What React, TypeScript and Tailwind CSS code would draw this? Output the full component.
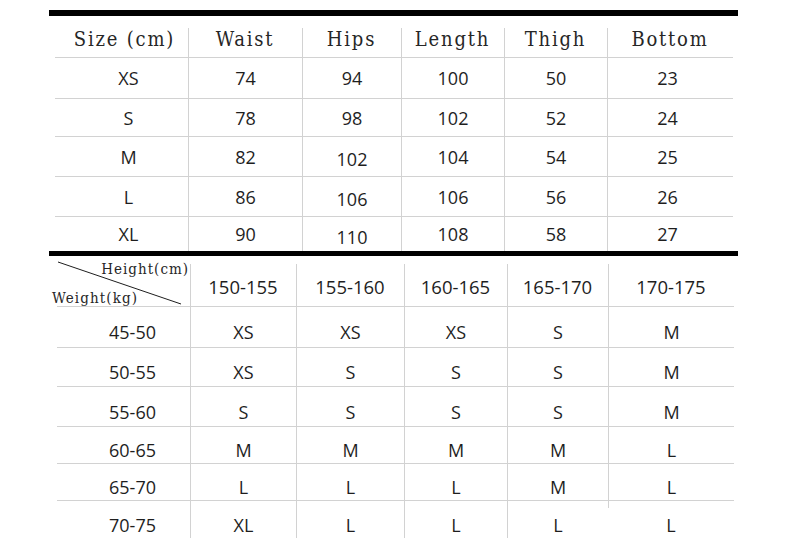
import React from "react";

const serif = { fontFamily: '"DejaVu Serif", "Liberation Serif", serif', fontStretch: "condensed" as const };
const sans = { fontFamily: '"Open Sans", "Noto Sans", sans-serif' };

const topW = ["w-[133px]", "w-[114px]", "w-[99px]", "w-[103px]", "w-[103px]", "w-[126px]"];
const botW = ["w-[133px]", "w-[106px]", "w-[108px]", "w-[103px]", "w-[101px]", "w-[126px]"];

const topHead = ["Size (cm)", "Waist", "Hips", "Length", "Thigh", "Bottom"];
const topRows: { h: string; cells: string[]; hipPad: string }[] = [
  { h: "h-[41px]", cells: ["XS", "74", "94", "100", "50", "23"], hipPad: "pt-0" },
  { h: "h-[38px]", cells: ["S", "78", "98", "102", "52", "24"], hipPad: "pt-0" },
  { h: "h-[40px]", cells: ["M", "82", "102", "104", "54", "25"], hipPad: "pt-[4px]" },
  { h: "h-[40px]", cells: ["L", "86", "106", "106", "56", "26"], hipPad: "pt-[4px]" },
  { h: "h-[34px]", cells: ["XL", "90", "110", "108", "58", "27"], hipPad: "pt-[5px]" },
];

const botHead = ["150-155", "155-160", "160-165", "165-170", "170-175"];
const botRows: { h: string; cells: string[] }[] = [
  { h: "h-[41px]", cells: ["45-50", "XS", "XS", "XS", "S", "M"] },
  { h: "h-[39px]", cells: ["50-55", "XS", "S", "S", "S", "M"] },
  { h: "h-[40px]", cells: ["55-60", "S", "S", "S", "S", "M"] },
  { h: "h-[37px]", cells: ["60-65", "M", "M", "M", "M", "L"] },
  { h: "h-[37px]", cells: ["65-70", "L", "L", "L", "M", "L"] },
  { h: "h-[37px]", cells: ["70-75", "XL", "L", "L", "L", "L"] },
];

const lineHead =
  "bg-[linear-gradient(#d2d2d2,#d2d2d2)] bg-no-repeat bg-[length:1px_29px] bg-[position:0_100%]";
const lineHeadBot =
  "bg-[linear-gradient(#d2d2d2,#d2d2d2)] bg-no-repeat bg-[length:1px_42px] bg-[position:0_100%]";
const lineStub =
  "bg-[linear-gradient(#d2d2d2,#d2d2d2)] bg-no-repeat bg-[length:1px_7px] bg-[position:0_0]";

export default function App() {
  return (
    <div className="w-[790px] h-[547px] bg-white text-[#1e1e1e] pt-[10px] overflow-hidden">
      {/* top bar */}
      <div className="ml-[49px] w-[689px] h-[6px] bg-black" />

      {/* size table */}
      <div className="ml-[55px] w-[678px]">
        <div className="flex h-[42px] border-b border-[#d2d2d2]">
          {topHead.map((t, i) => (
            <div
              key={t}
              className={`${topW[i]} flex items-center justify-center pt-[5px] ${i === 0 ? "pl-[6px]" : lineHead}`}
            >
              <span
                className="inline-block text-[20px] leading-none tracking-[1.8px] whitespace-pre text-[#262626]"
                style={serif}
              >
                {t}
              </span>
            </div>
          ))}
        </div>
        {topRows.map((r, ri) => (
          <div
            key={ri}
            className={`flex ${r.h} ${ri < topRows.length - 1 ? "border-b border-[#d2d2d2]" : ""}`}
          >
            {r.cells.map((c, i) => (
              <div
                key={i}
                className={`${topW[i]} flex items-center justify-center text-[18px] leading-none ${
                  i === 0 ? "pl-[14px]" : "border-l border-[#d2d2d2]"
                } ${i === 2 ? r.hipPad : ""} ${i === 5 ? "pr-[6px]" : ""}`}
                style={sans}
              >
                {c}
              </div>
            ))}
          </div>
        ))}
      </div>

      {/* middle bar */}
      <div className="ml-[49px] w-[689px] h-[5px] bg-black" />

      {/* recommendation table */}
      <div className="ml-[57px] w-[677px]">
        <div className="flex h-[51px] border-b border-[#d2d2d2]">
          <div className="w-[133px] relative flex flex-col pt-[3px]">
            <svg className="absolute inset-0" width="133" height="50">
              <line x1="1" y1="6" x2="124" y2="48" stroke="#1e1e1e" strokeWidth="1" />
            </svg>
            <div className="flex justify-end pr-[1px] h-[20px] items-center">
              <span
                className="inline-block text-[15px] leading-none tracking-[1px] text-[#262626]"
                style={serif}
              >
                Height(cm)
              </span>
            </div>
            <div className="flex -ml-[5px] pt-[12px] items-center">
              <span
                className="inline-block text-[15px] leading-none tracking-[1.1px] text-[#262626]"
                style={serif}
              >
                Weight(kg)
              </span>
            </div>
          </div>
          {botHead.map((t, i) => (
            <div
              key={t}
              className={`${botW[i + 1]} flex items-center justify-center pt-[12px] text-[18.5px] leading-none ${lineHeadBot}`}
              style={sans}
            >
              {t}
            </div>
          ))}
        </div>
        {botRows.map((r, ri) => {
          const last = ri === botRows.length - 1;
          return (
            <div
              key={ri}
              className={`flex ${r.h} ${!last ? "border-b border-[#d2d2d2]" : ""}`}
            >
              {r.cells.map((c, i) => (
                <div
                  key={i}
                  className={`${botW[i]} flex items-center justify-center pt-[10px] text-[18px] leading-none ${
                    i === 0
                      ? "pl-[18px]"
                      : last && i === 5
                      ? lineStub
                      : "border-l border-[#d2d2d2]"
                  }`}
                  style={sans}
                >
                  {c}
                </div>
              ))}
            </div>
          );
        })}
      </div>
    </div>
  );
}
